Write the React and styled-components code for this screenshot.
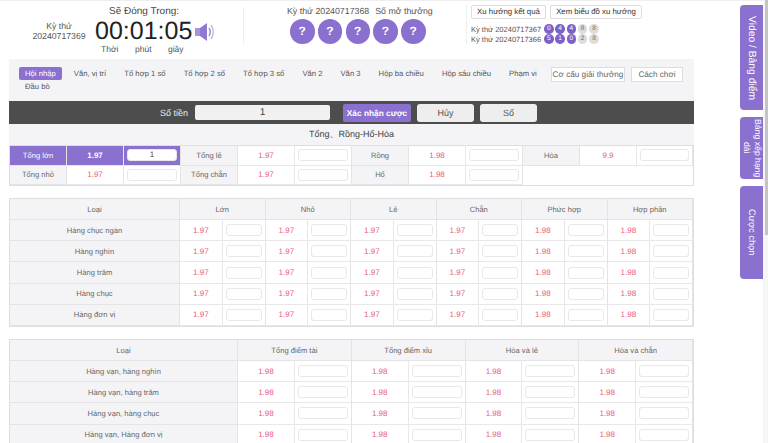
import React from "react";
import styled, { createGlobalStyle } from "styled-components";

const PURPLE = "#8a70cf";

const GlobalStyle = createGlobalStyle`
  * { margin: 0; padding: 0; box-sizing: border-box; }
  html, body { width: 768px; height: 443px; overflow: hidden; background: #fff; }
  body {
    font-family: "Liberation Sans", Arial, sans-serif;
    color: #555;
    font-size: 8.5px;
    text-rendering: geometricPrecision;
  }
`;

const Page = styled.div`
  width: 768px;
  height: 443px;
  display: flex;
  overflow: hidden;
  box-shadow: inset 0 1px 0 #eee;
`;
const Main = styled.div`
  width: 694px;
  flex: none;
  padding-left: 9px;
`;
const Header = styled.header`
  height: 59px;
  display: flex;
  margin-left: -9px;
`;
const Issue = styled.div`
  width: 90px;
  padding: 21px 0 0 28px;
  text-align: center;
  line-height: 10px;
  font-size: 8.7px;
  color: #555;
  white-space: nowrap;
`;
const Timer = styled.div`
  width: 115px;
  padding-top: 6px;
`;
const TimerTitle = styled.div`
  font-size: 10px;
  color: #444;
  margin-left: 19px;
  line-height: 12px;
`;
const Clock = styled.div`
  font-size: 25px;
  line-height: 25px;
  color: #222;
  margin: 1px 0 0 5px;
  display: flex;
  align-items: center;
  white-space: nowrap;
  svg { margin-left: 3px; flex: none; }
`;
const Units = styled.div`
  display: flex;
  font-size: 8.5px;
  margin: 0 0 0 11px;
  line-height: 11px;
  color: #555;
  span:nth-child(1) { width: 34px; }
  span:nth-child(2) { width: 33px; }
`;
const Divider = styled.div`
  width: 1px;
  height: 38px;
  margin: 7px 0 0 38px;
  background: #eee;
  flex: none;
`;
const Draw = styled.div`
  width: 222px;
  padding: 6px 0 0 43px;
  flex: none;
`;
const DrawTitle = styled.div`
  font-size: 8.8px;
  line-height: 11px;
  white-space: nowrap;
  span { margin-left: 6px; }
`;
const Balls = styled.div`
  display: flex;
  gap: 3.25px;
  margin: 2px 0 0 3px;
`;
const Ball = styled.div`
  width: 24.5px;
  height: 24.5px;
  flex: none;
  border-radius: 50%;
  background: ${PURPLE};
  color: #fff;
  font-size: 12px;
  font-weight: bold;
  display: flex;
  align-items: center;
  justify-content: center;
`;
const Trend = styled.div`
  margin-top: 4px;
  padding: 1px 0 0 4px;
  border-left: 1px solid #eee;
  height: 40px;
  width: 190px;
  flex: none;
`;
const TrendButtons = styled.div`
  display: flex;
  gap: 4px;
`;
const TrendButton = styled.div`
  width: ${(p) => p.$width}px;
  height: 14px;
  border: 1px solid #ddd;
  border-radius: 2px;
  background: #fff;
  font-size: 7.8px;
  line-height: 12px;
  text-align: center;
  color: #333;
  white-space: nowrap;
`;
const History = styled.div`
  margin-top: 5px;
`;
const HistoryRow = styled.div`
  display: flex;
  align-items: center;
  height: 10px;
  font-size: 7.5px;
  color: #555;
  white-space: nowrap;
  span { width: 73px; }
`;
const MiniBall = styled.i`
  width: 9.5px;
  height: 9.5px;
  margin-right: 1.8px;
  border-radius: 50%;
  font-style: normal;
  font-size: 6.5px;
  line-height: 9.5px;
  text-align: center;
  background: ${(p) => (p.$on ? "#7c62c8" : "#ddd")};
  color: ${(p) => (p.$on ? "#fff" : "#666")};
`;

const Nav = styled.nav`
  width: 685px;
  height: 42px;
  background: #f4f4f7;
  padding: 8px 0 0 10px;
  display: flex;
  position: relative;
`;
const NavItems = styled.div`
  width: 525px;
  display: flex;
  flex-wrap: wrap;
  align-content: flex-start;
`;
const NavItem = styled.div`
  height: 13px;
  line-height: 13px;
  margin-right: ${(p) => p.$gap}px;
  padding: 0 ${(p) => (p.$active ? 6 : 0)}px;
  font-size: 7.7px;
  white-space: nowrap;
  border-radius: 2px;
  color: ${(p) => (p.$active ? "#fff" : "#555")};
  background: ${(p) => (p.$active ? PURPLE : "transparent")};
  &:last-child { margin-left: 6px; }
`;
const NavButton = styled.div`
  position: absolute;
  top: 8px;
  height: 15px;
  border: 1px solid #ddd;
  background: #fff;
  font-size: 8.2px;
  line-height: 13px;
  text-align: center;
  color: #666;
  white-space: nowrap;
  left: ${(p) => p.$left}px;
  width: ${(p) => p.$width}px;
`;
const BetBar = styled.div`
  width: 685px;
  height: 23px;
  background: #4d4d4d;
  display: flex;
  align-items: center;
`;
const BetLabel = styled.div`
  color: #eee;
  font-size: 9px;
  width: 179px;
  text-align: right;
  margin-right: 7px;
`;
const AmountBox = styled.div`
  width: 135px;
  height: 15px;
  background: #f1f1f1;
  font-size: 10px;
  line-height: 15px;
  text-align: center;
  color: #444;
  border-radius: 2px;
`;
const Confirm = styled.div`
  margin-left: 13px;
  width: 68px;
  height: 18px;
  background: ${PURPLE};
  color: #fff;
  font-size: 8.3px;
  font-weight: bold;
  line-height: 18px;
  text-align: center;
  border-radius: 2px;
  white-space: nowrap;
`;
const GrayBtn = styled.div`
  width: 57px;
  height: 18px;
  margin-left: 6px;
  background: #eee;
  color: #555;
  font-size: 9px;
  line-height: 18px;
  text-align: center;
  border-radius: 3px;
`;
const Heading = styled.div`
  width: 685px;
  height: 21px;
  background: #f4f4f7;
  text-align: center;
  font-size: 9px;
  line-height: 21px;
  color: #444;
`;
const Grid = styled.div`
  width: 685px;
  display: grid;
  grid-template-columns: ${(p) => p.$cols};
  grid-auto-rows: ${(p) => p.$row}px;
  margin-top: ${(p) => p.$mt || 0}px;
  border: 1px solid #dedee1;
  font-size: 7.6px;
`;
const Label = styled.div`
  background: ${(p) => (p.$active ? PURPLE : "#f4f4f7")};
  color: ${(p) => (p.$active ? "#fff" : "#666")};
  display: flex;
  align-items: center;
  justify-content: center;
  border-right: 1px solid #e4e4e7;
  border-bottom: 1px solid #e4e4e7;
  white-space: nowrap;
`;
const Odds = styled.div`
  background: ${(p) => (p.$active ? PURPLE : "#fff")};
  color: ${(p) => (p.$active ? "#fff" : "#e8617f")};
  font-size: 8px;
  font-weight: ${(p) => (p.$active ? "bold" : "normal")};
  display: flex;
  align-items: center;
  justify-content: center;
  border-right: 1px solid #e8e8ea;
  border-bottom: 1px solid #e8e8ea;
`;
const InputCell = styled.div`
  background: ${(p) => (p.$active ? PURPLE : "#fff")};
  display: flex;
  align-items: center;
  justify-content: center;
  border-right: 1px solid #e4e4e7;
  border-bottom: 1px solid #e8e8ea;
  padding: 0 3px;
`;
const Field = styled.div`
  width: 100%;
  height: 12px;
  border: 1px solid #e8e8ea;
  border-radius: 3px;
  background: #fff;
  text-align: center;
  font-size: 8px;
  line-height: 10px;
  color: #444;
`;
const Blank = styled.div`
  grid-column: span 3;
`;
const HeadCell = styled(Label)`
  grid-column: span 2;
`;

const Bet = ({ odds, value, active }) => (
  <>
    <Odds $active={active}>{odds}</Odds>
    <InputCell $active={active}>
      <Field>{value}</Field>
    </InputCell>
  </>
);

const Side = styled.aside`
  flex: 1;
  display: flex;
  flex-direction: column;
  gap: 7px;
  padding: 5px 0 0 46px;
  position: relative;
`;
const Tab = styled.div`
  width: 23px;
  height: ${(p) => p.$h}px;
  background: ${PURPLE};
  border-radius: 4px 0 0 4px;
  color: #fff;
  font-size: ${(p) => p.$fs}px;
  writing-mode: vertical-rl;
  text-align: center;
  display: flex;
  align-items: center;
  justify-content: center;
  line-height: 11px;
`;
const Scrollbar = styled.div`
  position: absolute;
  top: 0;
  right: 0;
  width: 5px;
  height: 443px;
  background: #f6f6f6;
  &::before {
    content: "";
    display: block;
    width: 3px;
    height: 235px;
    margin-left: 2px;
    background: #c4c4c4;
  }
`;

const Speaker = () => (
  <svg width="20" height="20" viewBox="0 0 20 20">
    <rect x="0" y="6" width="5" height="8" fill="#a594d8" />
    <path d="M5 6 L12 1 V19 L5 14 Z" fill="#8f7ad0" />
    <path d="M14 6 Q16.5 10 14 14" fill="none" stroke="#a594d8" strokeWidth="1.6" />
    <path d="M16 3 Q20.5 10 16 17" fill="none" stroke="#c3b8e6" strokeWidth="1.4" />
  </svg>
);

const navItems = [
  ["Hội nhập", 12, true],
  ["Văn, vị trí", 18],
  ["Tổ hợp 1 số", 18],
  ["Tổ hợp 2 số", 18],
  ["Tổ hợp 3 số", 18],
  ["Văn 2", 18],
  ["Văn 3", 18],
  ["Hộp ba chiều", 18],
  ["Hộp sáu chiều", 18],
  ["Phạm vi", 0],
  ["Đầu bò", 0],
];

const positions = ["Hàng chục ngàn", "Hàng nghìn", "Hàng trăm", "Hàng chục", "Hàng đơn vị"];
const sizes = [["Lớn", "1.97"], ["Nhỏ", "1.97"], ["Lẻ", "1.97"], ["Chẵn", "1.97"], ["Phức hợp", "1.98"], ["Hợp phần", "1.98"]];
const pairs = ["Hàng vạn, hàng nghìn", "Hàng vạn, hàng trăm", "Hàng vạn, hàng chục", "Hàng vạn, Hàng đơn vị"];
const sums = ["Tổng điểm tài", "Tổng điểm xỉu", "Hòa và lẻ", "Hòa và chẵn"];

export default function App() {
  return (
    <Page>
      <GlobalStyle />
      <Main>
        <Header>
          <Issue>Kỳ thứ<br />20240717369</Issue>
          <Timer>
            <TimerTitle>Sẽ Đóng Trong:</TimerTitle>
            <Clock>00:01:05<Speaker /></Clock>
            <Units><span>Thời</span><span>phút</span><span>giây</span></Units>
          </Timer>
          <Divider />
          <Draw>
            <DrawTitle>Kỳ thứ 20240717368<span>Số mở thưởng</span></DrawTitle>
            <Balls>{[0, 1, 2, 3, 4].map((i) => <Ball key={i}>?</Ball>)}</Balls>
          </Draw>
          <Trend>
            <TrendButtons>
              <TrendButton $width={75}>Xu hướng kết quả</TrendButton>
              <TrendButton $width={92}>Xem biểu đồ xu hướng</TrendButton>
            </TrendButtons>
            <History>
              <HistoryRow>
                <span>Kỳ thứ 20240717367</span>
                {[0, 4, 4].map((n, i) => <MiniBall key={i} $on>{n}</MiniBall>)}
                {[8, 8].map((n, i) => <MiniBall key={i}>{n}</MiniBall>)}
              </HistoryRow>
              <HistoryRow>
                <span>Kỳ thứ 20240717366</span>
                {[5, 1, 0].map((n, i) => <MiniBall key={i} $on>{n}</MiniBall>)}
                {[2, 8].map((n, i) => <MiniBall key={i}>{n}</MiniBall>)}
              </HistoryRow>
            </History>
          </Trend>
        </Header>
        <Nav>
          <NavItems>
            {navItems.map(([t, g, a]) => <NavItem key={t} $gap={g} $active={a}>{t}</NavItem>)}
          </NavItems>
          <NavButton $left={542} $width={74}>Cơ cấu giải thưởng</NavButton>
          <NavButton $left={622} $width={52}>Cách chơi</NavButton>
        </Nav>
        <BetBar>
          <BetLabel>Số tiền</BetLabel>
          <AmountBox>1</AmountBox>
          <Confirm>Xác nhận cược</Confirm>
          <GrayBtn>Hủy</GrayBtn>
          <GrayBtn>Số</GrayBtn>
        </BetBar>
        <Heading>Tổng、Rồng-Hổ-Hòa</Heading>
        <Grid $cols="repeat(11, 57px) 1fr" $row={19.5}>
          <Label $active>Tổng lớn</Label><Bet odds="1.97" value="1" active />
          <Label>Tổng lẻ</Label><Bet odds="1.97" />
          <Label>Rồng</Label><Bet odds="1.98" />
          <Label>Hòa</Label><Bet odds="9.9" />
          <Label>Tổng nhỏ</Label><Bet odds="1.97" />
          <Label>Tổng chẵn</Label><Bet odds="1.97" />
          <Label>Hổ</Label><Bet odds="1.98" />
          <Blank />
        </Grid>
        <Grid $mt={12} $cols="170px repeat(12, 1fr)" $row={21.17}>
          <Label>Loại</Label>
          {sizes.map(([t]) => <HeadCell key={t}>{t}</HeadCell>)}
          {positions.map((p) => (
            <React.Fragment key={p}>
              <Label>{p}</Label>
              {sizes.map(([t, o]) => <Bet key={t} odds={o} />)}
            </React.Fragment>
          ))}
        </Grid>
        <Grid $mt={12} $cols="228px repeat(8, 1fr)" $row={21.17}>
          <Label>Loại</Label>
          {sums.map((t) => <HeadCell key={t}>{t}</HeadCell>)}
          {pairs.map((p) => (
            <React.Fragment key={p}>
              <Label>{p}</Label>
              {sums.map((t) => <Bet key={t} odds="1.98" />)}
            </React.Fragment>
          ))}
        </Grid>
      </Main>
      <Side>
        <Tab $h={105} $fs={10.3}>Video / Bảng điểm</Tab>
        <Tab $h={62} $fs={8.7}>Bảng xếp hạng dài</Tab>
        <Tab $h={93} $fs={9.3}>Cược chọn</Tab>
        <Scrollbar />
      </Side>
    </Page>
  );
}
